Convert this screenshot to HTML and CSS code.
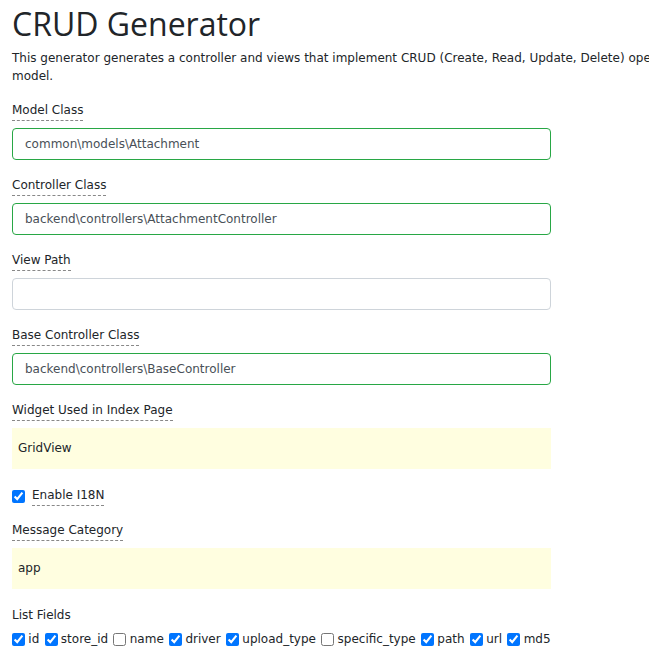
FILE: index.html
```html
<!DOCTYPE html>
<html>
<head>
<meta charset="utf-8">
<link rel="stylesheet" href="styles.css">
</head>
<body>
<div class="page">
  <h1 class="title">CRUD Generator</h1>
  <p class="intro">This generator generates a controller and views that implement CRUD (Create, Read, Update, Delete) operations for the specified data model.</p>

  <div class="group">
    <label class="hint">Model Class</label>
    <div class="input valid">common\models\Attachment</div>
  </div>
  <div class="group">
    <label class="hint">Controller Class</label>
    <div class="input valid">backend\controllers\AttachmentController</div>
  </div>
  <div class="group">
    <label class="hint">View Path</label>
    <div class="input"></div>
  </div>
  <div class="group">
    <label class="hint">Base Controller Class</label>
    <div class="input valid">backend\controllers\BaseController</div>
  </div>
  <div class="group">
    <label class="hint">Widget Used in Index Page</label>
    <div class="sticky">GridView</div>
  </div>
  <div class="check-group">
    <input type="checkbox" class="cb" checked>
    <label class="hint">Enable I18N</label>
  </div>
  <div class="group">
    <label class="hint">Message Category</label>
    <div class="sticky">app</div>
  </div>
  <div class="fields">
    <div class="fields-label">List Fields</div>
    <div class="fields-row">
      <label class="field"><input type="checkbox" class="cb" checked> id</label>
      <label class="field"><input type="checkbox" class="cb" checked> store_id</label>
      <label class="field"><input type="checkbox" class="cb"> name</label>
      <label class="field"><input type="checkbox" class="cb" checked> driver</label>
      <label class="field"><input type="checkbox" class="cb" checked> upload_type</label>
      <label class="field"><input type="checkbox" class="cb"> specific_type</label>
      <label class="field"><input type="checkbox" class="cb" checked> path</label>
      <label class="field"><input type="checkbox" class="cb" checked> url</label>
      <label class="field"><input type="checkbox" class="cb" checked> md5</label>
    </div>
  </div>
</div>
</body>
</html>
```

FILE: styles.css
```css
html, body {
  margin: 0;
  padding: 0;
  background: #fff;
}
body {
  font-family: "DejaVu Sans", Verdana, sans-serif;
  font-size: 12px;
  color: #212529;
  overflow: hidden;
}
.page {
  padding: 0 12px;
  width: 860px;
}
.title {
  font-family: "Open Sans", "Segoe UI", sans-serif;
  font-size: 32px;
  font-weight: 400;
  line-height: 38px;
  margin: 5px 0 0 0;
  color: #212529;
}
.intro {
  margin: 6px 0 0 0;
  line-height: 18px;
  width: 845px;
}
.group {
  margin-top: 16px;
}
.group + .group {
  margin-top: 16px;
}
.check-group + .group {
  margin-top: 15px;
}
.hint {
  display: inline-block;
  line-height: 18px;
  border-bottom: 1px dashed #888;
  padding-bottom: 1px;
}
.input {
  margin-top: 7px;
  width: 539px;
  height: 32px;
  box-sizing: border-box;
  border: 1px solid #ced4da;
  border-radius: 4px;
  padding: 0 12px;
  line-height: 30px;
  color: #495057;
  font-size: 12px;
}
.input.valid {
  border-color: #28a745;
}
.sticky {
  margin-top: 7px;
  width: 539px;
  height: 41px;
  box-sizing: border-box;
  background: #fffee0;
  padding: 0 6px;
  line-height: 41px;
  color: #212529;
}
.check-group {
  margin-top: 17px;
  display: flex;
  align-items: flex-start;
  gap: 7px;
}
.cb {
  width: 13px;
  height: 13px;
  margin: 0;
  accent-color: #0075ff;
}
.check-group .cb {
  margin-top: 4px;
}
.fields {
  margin-top: 17px;
}
.fields-label {
  line-height: 18px;
}
.fields-row {
  margin-top: 6px;
  display: flex;
  white-space: nowrap;
  line-height: 18px;
}
.field {
  display: inline-flex;
  align-items: center;
  gap: 3.3px;
  margin-right: 5.3px;
}
```
